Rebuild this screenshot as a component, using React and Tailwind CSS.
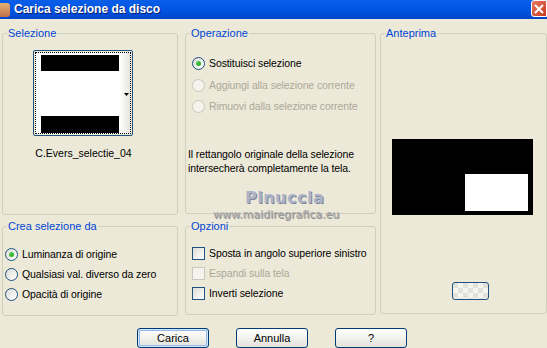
import React from "react";

const font = { fontFamily: '"Liberation Sans", Arial, sans-serif' };

function Group({ label, className, children }) {
  return (
    <div className={"relative rounded-[3px] border border-[#D0D0BF] " + className}>
      <span className="absolute -top-[7px] left-[4px] bg-[#ECE9D8] px-[1px] text-[11px] leading-[13px] text-[#0046D5]">
        {label}
      </span>
      {children}
    </div>
  );
}

function Radio({ checked, disabled, label }) {
  return (
    <div className="flex items-center gap-[4px] h-[13px]">
      <div
        className={
          "w-[13px] h-[13px] shrink-0 rounded-full border flex items-center justify-center " +
          (disabled
            ? "border-[#CAC8BB] bg-[#F4F3EE]"
            : "border-[#1C5180] bg-gradient-to-br from-[#DCDCD7] to-[#FFFFFF]")
        }
      >
        {checked && (
          <div className="w-[5px] h-[5px] rounded-full bg-gradient-to-br from-[#55D551] to-[#21A121]" />
        )}
      </div>
      <span
        className={
          "whitespace-nowrap text-[10.5px] tracking-[-0.1px] leading-[13px] " +
          (disabled ? "text-[#ACA899]" : "text-black")
        }
      >
        {label}
      </span>
    </div>
  );
}

function Check({ disabled, label }) {
  return (
    <div className="flex items-center gap-[4px] h-[13px]">
      <div
        className={
          "w-[13px] h-[13px] shrink-0 border " +
          (disabled
            ? "border-[#CAC8BB] bg-[#F4F3EE]"
            : "border-[#1C5180] bg-gradient-to-br from-[#DCDCD7] to-[#FFFFFF]")
        }
      />
      <span
        className={
          "whitespace-nowrap text-[10.5px] tracking-[-0.1px] leading-[13px] " +
          (disabled ? "text-[#ACA899]" : "text-black")
        }
      >
        {label}
      </span>
    </div>
  );
}

function Button({ children, isDefault }) {
  return (
    <div
      className={
        "w-[72px] h-[20px] rounded-[3px] border border-[#003C74] bg-gradient-to-b from-[#FFFFFF] to-[#E3E3DB] flex items-center justify-center text-[11px] text-black " +
        (isDefault ? "shadow-[inset_0_0_0_1px_#CEE7FF,inset_0_0_0_2px_#98B8EA]" : "")
      }
    >
      {children}
    </div>
  );
}

export default function App() {
  return (
    <div className="relative w-[547px] h-[348px] overflow-hidden bg-[#ECE9D8]" style={font}>
      {/* Title bar */}
      <div className="h-[19px] flex items-center bg-gradient-to-b from-[#0A5EE8] via-[#0055E5] to-[#0046C8] relative">
        <div className="w-[10px] h-[14px] rounded-r-[3px] bg-gradient-to-b from-[#E8B070] to-[#C0704A]" />
        <span className="ml-[4px] text-[12px] font-bold text-white [text-shadow:1px_1px_0_#0A1E70] leading-[19px]">
          Carica selezione da disco
        </span>
        <div className="ml-auto w-[16px] h-[17px] self-start rounded-l-[3px] border border-white bg-gradient-to-br from-[#E57860] to-[#C43A1E] flex items-center justify-center">
          <svg width="10" height="10" viewBox="0 0 10 10">
            <path d="M1 1 L9 9 M9 1 L1 9" stroke="white" strokeWidth="2" />
          </svg>
        </div>
      </div>

      {/* Body */}
      <div className="flex pt-[14px] pl-[2px]">
        {/* Column 1 */}
        <div className="w-[176px] flex flex-col gap-[11px]">
          <Group label="Selezione" className="h-[182px]">
            <div className="ml-[30px] mt-[16px] w-[100px] h-[86px] rounded-[2px] border border-[#1C5180] p-[1px]">
              <div className="w-full h-full border border-dotted border-black bg-white flex">
                <div className="pl-[5px] pt-[2px] flex flex-col">
                  <div className="w-[78px] h-[16px] bg-black" />
                  <div className="w-[78px] h-[45px] bg-white" />
                  <div className="w-[78px] h-[17px] bg-black" />
                </div>
                <div className="w-[11px] bg-gradient-to-r from-[#FFFFFF] to-[#E6E6DE] flex items-center justify-center">
                  <svg width="5" height="3" viewBox="0 0 5 3" className="mt-[3px] ml-[4px]">
                    <path d="M0 0 H5 L2.5 3 Z" fill="black" />
                  </svg>
                </div>
              </div>
            </div>
            <div className="mt-[11px] w-[161px] text-center text-[10.5px] leading-[13px] text-black">
              C.Evers_selectie_04
            </div>
          </Group>
          <Group label="Crea selezione da" className="h-[90px]">
            <div className="pl-[2px] pt-[21px] flex flex-col gap-[7px]">
              <Radio checked label="Luminanza di origine" />
              <Radio label="Qualsiasi val. diverso da zero" />
              <Radio label="Opacità di origine" />
            </div>
          </Group>
        </div>

        {/* Column 2 */}
        <div className="ml-[7px] w-[191px] flex flex-col gap-[12px]">
          <Group label="Operazione" className="h-[181px]">
            <div className="pl-[6px] pt-[23px] flex flex-col gap-[8.5px]">
              <Radio checked label="Sostituisci selezione" />
              <Radio disabled label="Aggiungi alla selezione corrente" />
              <Radio disabled label="Rimuovi dalla selezione corrente" />
            </div>
            <div className="pl-[2px] mt-[34px] text-[10.5px] tracking-[-0.1px] leading-[14px] text-black whitespace-nowrap">
              <div>Il rettangolo originale della selezione</div>
              <div>intersecherà completamente la tela.</div>
            </div>
          </Group>
          <Group label="Opzioni" className="h-[89px]">
            <div className="pl-[6px] pt-[20px] flex flex-col gap-[7px]">
              <Check label="Sposta in angolo superiore sinistro" />
              <Check disabled label="Espandi sulla tela" />
              <Check label="Inverti selezione" />
            </div>
          </Group>
        </div>

        {/* Column 3 */}
        <div className="ml-[4px] w-[167px]">
          <Group label="Anteprima" className="h-[281px]">
            <div className="ml-[11px] mt-[105px] w-[141px] h-[76px] bg-black pl-[73px] pt-[35px]">
              <div className="w-[63px] h-[37px] bg-white" />
            </div>
            <div className="ml-[71px] mt-[67px] w-[37px] h-[18px] rounded-[3px] border border-[#1C5180] bg-[repeating-conic-gradient(#F4F4F0_0%_25%,#E2E2DA_0%_50%)] bg-[length:10px_10px]" />
          </Group>
        </div>
      </div>

      {/* Buttons */}
      <div className="flex gap-[27px] pl-[137px] mt-[12px]">
        <Button isDefault>Carica</Button>
        <Button>Annulla</Button>
        <Button>?</Button>
      </div>

      {/* Watermark */}
      <div
        className="absolute left-[245px] top-[189px] text-[16px] leading-[18px] font-bold tracking-[0.5px] text-[#AEB4C8] [text-shadow:1px_1px_0_#7D8499]"
        style={{ fontFamily: '"DejaVu Sans", sans-serif' }}
      >
        Pinuccia
      </div>
      <div
        className="absolute left-[213px] top-[209px] text-[11px] leading-[12px] text-[#ABABAB] [text-shadow:1px_1px_0_#8E8E8E]"
        style={{ fontFamily: '"DejaVu Sans", sans-serif' }}
      >
        www.maidiregrafica.eu
      </div>
    </div>
  );
}
